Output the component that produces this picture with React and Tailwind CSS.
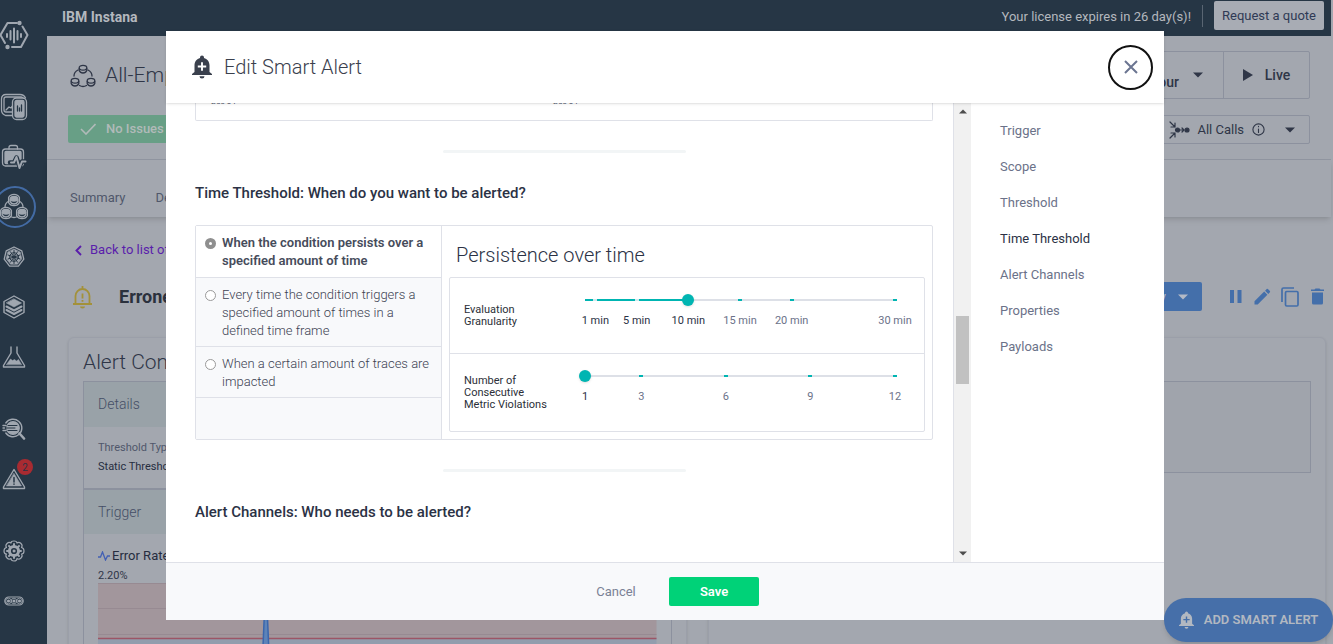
import React, { useState } from "react";

const stroke = {
  fill: "none",
  stroke: "currentColor",
  strokeLinecap: "round",
  strokeLinejoin: "round",
};

function LogoIcon() {
  return (
    <svg width="30" height="30" viewBox="0 0 30 30" className="shrink-0" {...stroke} strokeWidth="2">
      <path d="M18 3H8.500L1.500 15l4.500 8M13 27h9l6.500-12L23.500 6.500" />
      <path d="M8 14v3M11.500 11v8.500M15 8.500v14M18.500 11v8.500M22 14v3" />
      <circle cx="20.500" cy="3" r="1.200" fill="currentColor" />
      <circle cx="8.500" cy="27" r="1.200" fill="currentColor" />
    </svg>
  );
}

function DevicesIcon() {
  return (
    <svg width="28" height="28" viewBox="0 0 28 28" {...stroke} strokeWidth="1.300">
      <path d="M12 22.500H5.500Q1.500 21 1.500 17V6Q1.500 1.500 6 1.500H20Q24 1.500 25.500 5" />
      <rect x="4" y="4" width="19" height="15" rx="2" />
      <path d="M6 17l3-3 2 1 3-4" />
      <rect x="12.500" y="5" width="14" height="21.500" rx="4" fill="#263645" />
      <rect x="15" y="7.500" width="9" height="16.500" rx="1.500" fill="currentColor" />
      <path d="M17.500 18v-5M19.500 18v-3M21.500 18v-6" stroke="#263645" />
    </svg>
  );
}

function MonitorIcon() {
  return (
    <svg width="26" height="26" viewBox="0 0 26 26" {...stroke} strokeWidth="1.300">
      <path d="M8 5V3.500Q8 1.500 10 1.500h4.500Q16.500 1.500 16.500 3.500V5" />
      <rect x="1.500" y="5" width="21" height="17" rx="3" />
      <rect x="4" y="7.500" width="16" height="12" rx="1" fill="currentColor" />
      <path d="M9 18.500h4l2.500-5 3 9 2.500-5h4" stroke="#263645" strokeWidth="4.500" />
      <path d="M10 18.500h3l2.500-5.500 3 11 2.500-6.500h3.500" strokeWidth="2" />
    </svg>
  );
}

function AppsIcon({ size = 28, filled }) {
  const fill = filled ? "currentColor" : "none";
  const Node = ({ x, y }) => (
    <g>
      {filled && (
        <path
          d={`M${x - 5.400} ${y - 2}Q${x - 4} ${y - 5.200} ${x} ${y - 5.200}T${x + 5.400} ${y - 2}V${y + 3}Q${x + 4} ${y + 6.200} ${x} ${y + 6.200}T${x - 5.400} ${y + 3}Z`}
        />
      )}
      <ellipse cx={x} cy={y - 0.800} rx="3.800" ry="2.400" fill={fill} />
      <path d={`M${x - 3.800} ${y}v2q1 2.500 3.800 2.500t3.800-2.500v-2`} />
    </g>
  );
  return (
    <svg width={size} height={size} viewBox="0 0 28 28" {...stroke} strokeWidth="1.300">
      <path d="M9 8Q5 10 5 14M19 8q4 2 4 6M10.500 23.500q3.500 2 7 0" />
      <Node x={14} y={6.500} />
      <Node x={6} y={19.500} />
      <Node x={22} y={19.500} />
    </svg>
  );
}

function KubernetesIcon() {
  return (
    <svg width="22" height="22" viewBox="0 0 22 22" {...stroke} strokeWidth="1.300">
      <path d="M11 1l7.800 3.800 2 8.400-5.400 7H6.600l-5.400-7 2-8.400z" />
      <path
        d="M11 3l6.200 3 1.600 6.800-4.300 5.500H7.500l-4.300-5.500L4.800 6z"
        fill="currentColor"
        strokeWidth="0.500"
      />
      <g stroke="#263645" strokeWidth="1">
        <circle cx="11" cy="11" r="4.300" />
        <path d="M11 4.500v13M5 9l12 4M5 13l12-4M7.500 5.800l7 10.400M14.500 5.800l-7 10.400" />
      </g>
    </svg>
  );
}

function LayersIcon() {
  return (
    <svg width="22" height="24" viewBox="0 0 22 24" {...stroke} strokeWidth="1.400">
      <path d="M11 1l10 5.500v11L11 23 1 17.500v-11z" />
      <path d="M11 4l7.500 4-7.500 4-7.500-4z" fill="currentColor" strokeWidth="0.600" />
      <path d="M3.500 11.500l7.500 4 7.500-4M3.500 15l7.500 4 7.500-4" strokeWidth="2" />
    </svg>
  );
}

function FlaskIcon() {
  return (
    <svg width="24" height="22" viewBox="0 0 24 22" {...stroke} strokeWidth="1.400">
      <path d="M9 1v6L1.500 19.500V21h21v-1.500L15 7V1" />
      <path d="M4.500 18.500L8.500 13l2 1.500 2-1 2 1.500 2-1.500 3 5z" fill="currentColor" strokeWidth="0.500" />
    </svg>
  );
}

function AnalyzeIcon() {
  return (
    <svg width="24" height="22" viewBox="0 0 24 22" {...stroke} strokeWidth="1.400">
      <path d="M3.800 5A8.800 8.800 0 1 1 3.800 15" />
      <circle cx="11" cy="10" r="6.200" fill="currentColor" />
      <path d="M17.500 15.500l4.500 5" strokeWidth="2.600" />
      <path d="M6 7.500h9M4 10h9M6 12.500h9" stroke="#263645" strokeWidth="1" />
      <path d="M1 7.500h3M1 10h1.500M1 12.500h3" />
    </svg>
  );
}

function WarningIcon() {
  return (
    <svg width="24" height="22" viewBox="0 0 24 22" {...stroke} strokeWidth="1.400">
      <path d="M12 1.500L22.500 19v1.500h-21V19z" />
      <path d="M12 5.500l7.500 12.500h-15z" fill="currentColor" strokeWidth="0.500" />
      <path d="M12 9.500v4.500M12 16v.2" stroke="#263645" strokeWidth="1.500" />
    </svg>
  );
}

function GearIcon() {
  return (
    <svg width="22" height="22" viewBox="0 0 22 22" {...stroke} strokeWidth="1.200">
      <path d="M8 3Q8 1 11 1t3 2q2-1.500 4 .500t0.500 4Q21 8 21 11t-2.500 3q1.500 2-.500 4t-4 .500Q14 21 11 21t-3-2.500q-2 1.500-4-.500t-.500-4Q1 14 1 11t2.500-3.500Q2 5.500 4 3.500T8 3z" />
      <circle cx="11" cy="11" r="4.600" strokeWidth="3" />
      <path
        d="M11 4v2M11 16v2M4 11h2M16 11h2M6 6l1.400 1.400M14.600 14.600L16 16M6 16l1.400-1.400M14.600 7.400L16 6"
        strokeWidth="2"
      />
      <circle cx="11" cy="11" r="1.200" fill="currentColor" strokeWidth="0.500" />
    </svg>
  );
}

function MoreIcon() {
  return (
    <svg width="20" height="10" viewBox="0 0 20 10" {...stroke} strokeWidth="1.200">
      <rect x="0.800" y="1" width="18.400" height="8" rx="4" />
      {[4.500, 10, 15.500].map((x) => (
        <g key={x}>
          <circle cx={x} cy="5" r="2.800" strokeWidth="0.800" />
          <circle cx={x} cy="5" r="1.600" fill="currentColor" stroke="none" />
        </g>
      ))}
    </svg>
  );
}

function BellPlusIcon({ width = 20, height = 24, plus = "#fff" }) {
  return (
    <svg width={width} height={height} viewBox="0 0 20 24">
      <path
        fill="currentColor"
        d="M10 .500a2 2 0 0 1 2 2v.500c3.200.900 5.500 3.700 5.500 7.200V17l2.500 2v1H0v-1l2.500-2v-6.800C2.500 6.700 4.800 3.900 8 3v-.500a2 2 0 0 1 2-2zM7.500 21.300h5a2.500 2.300 0 0 1-5 0z"
      />
      <path stroke={plus} strokeWidth="1.900" d="M10 7.300v8.400M5.800 11.500h8.400" />
    </svg>
  );
}

function Caret({ className = "" }) {
  return (
    <svg width="10" height="6" viewBox="0 0 10 6" className={className}>
      <path d="M0 .500h10L5 5.500z" fill="currentColor" />
    </svg>
  );
}

const NAV = [
  [
    ["Websites & Mobile Apps", DevicesIcon],
    ["Synthetic Monitoring", MonitorIcon],
    ["Applications", AppsIcon],
    ["Kubernetes", KubernetesIcon],
    ["Infrastructure", LayersIcon],
    ["Lab", FlaskIcon],
  ],
  [
    ["Analytics", AnalyzeIcon],
    ["Events", WarningIcon],
  ],
  [
    ["Settings", GearIcon],
    ["More", MoreIcon],
  ],
];

function Sidebar() {
  return (
    <aside className="flex w-[47px] shrink-0 flex-col overflow-hidden bg-[#263645] text-[#a0a7b0]">
      <a href="#home" aria-label="Home" className="flex h-[70px] w-7 items-center justify-center">
        <LogoIcon />
      </a>
      <nav className="flex flex-col gap-[22px] pt-3">
        {NAV.map((group, i) => (
          <div key={i} className="flex flex-col">
            {group.map(([name, Icon]) => (
              <a
                key={name}
                href="#nav"
                aria-label={name}
                className="relative flex h-[50px] w-7 items-center justify-center"
              >
                {name === "Applications" && (
                  <span className="absolute top-1 -left-[6px] size-[42px] rounded-full border-2 border-[#436ba4]" />
                )}
                <Icon filled={name === "Applications" ? true : undefined} />
                {name === "Events" && (
                  <span className="absolute top-[5px] left-[17px] flex size-4 items-center justify-center rounded-full bg-[#a82b31] text-[10px] text-[#2b3245]">
                    2
                  </span>
                )}
              </a>
            ))}
          </div>
        ))}
      </nav>
    </aside>
  );
}

function TopBar() {
  return (
    <header className="flex h-9 shrink-0 items-start justify-between bg-[#263645] pr-[7px] pl-[15px] text-[13px] text-[#b4b8be]">
      <span className="pt-[7px] text-[14px] font-bold leading-5">IBM Instana</span>
      <div className="flex items-start">
        <span className="pt-[7px] leading-5">Your license expires in 26 day(s)!</span>
        <span className="mx-[11px] mt-[5px] h-[22px] w-px bg-[#596572]" />
        <button className="mt-px h-[29px] w-[110px] rounded-xs bg-[#a8acb4] text-[13px] text-[#2f3a55]">
          Request a quote
        </button>
      </div>
    </header>
  );
}

function PageHeader() {
  return (
    <div className="flex h-[124px] shrink-0 justify-between border-b border-[#9095a0] pr-[21px] pl-[21px] text-[#2f3647]">
      <div className="flex flex-col">
        <div className="flex h-[79px] items-center gap-2 pl-px">
          <AppsIcon />
          <h1 className="text-[21px] font-light">All-Employees</h1>
        </div>
        <div className="flex h-7 w-[120px] items-center rounded-xs bg-[#689f86] pl-3 text-[13px] font-medium text-[#b1bab9]">
          <svg width="16" height="12" viewBox="0 0 16 12" className="mr-[10px]">
            <path d="M1 6l5 5L15.500 1" fill="none" stroke="currentColor" strokeWidth="1.600" />
          </svg>
          No Issues
        </div>
      </div>
      <div className="flex flex-col items-end gap-4 pt-[15px]">
        <div className="flex h-12 rounded-xs border border-[#8c919e] text-[14px] font-medium">
          <button className="flex w-[140px] items-center justify-end gap-[14px] border-r border-[#8c919e] pr-5">
            <span className="pt-[14px]">Last hour</span>
            <Caret />
          </button>
          <button className="flex w-[85px] items-center justify-center gap-3">
            <svg width="10" height="12" viewBox="0 0 10 12">
              <path d="M0 0l10 6-10 6z" fill="currentColor" />
            </svg>
            Live
          </button>
        </div>
        <button className="flex h-[29px] items-center rounded-xs border border-[#8c919e] pr-[14px] pl-3 text-[13px]">
          <svg width="21" height="18" viewBox="0 0 21 18" className="mr-[7px]" {...stroke} strokeWidth="1.200">
            <path d="M1 1l5 5M6 2v4H2M1 17l5-5M6 16v-4H2M10 9h5M13 7l2 2-2 2" />
            <circle cx="8.500" cy="9" r="2" fill="currentColor" />
            <circle cx="18" cy="9" r="2" fill="currentColor" />
          </svg>
          All Calls
          <svg width="13" height="13" viewBox="0 0 13 13" className="mr-5 ml-2" {...stroke} strokeWidth="1.100">
            <circle cx="6.500" cy="6.500" r="5.600" />
            <path d="M6.500 6v3.500M6.500 3.400v.3" />
          </svg>
          <Caret />
        </button>
      </div>
    </div>
  );
}

function AlertActions() {
  return (
    <div className="flex items-center text-[#446faa]">
      <button className="flex h-[29px] w-[116px] items-center justify-end gap-3 rounded-xs bg-[#446faa] pr-[14px] text-[13px] text-[#b4bac6]">
        View History
        <Caret />
      </button>
      <button aria-label="Pause" className="ml-7">
        <svg width="12" height="13" viewBox="0 0 12 13" fill="currentColor">
          <path d="M0 0h4v13H0zM7.500 0h4v13h-4z" />
        </svg>
      </button>
      <button aria-label="Edit" className="ml-3">
        <svg width="17" height="17" viewBox="0 0 17 17" fill="currentColor">
          <path d="M.500 13.300L10.200 3.600l3.200 3.200-9.700 9.700H.500zM15.900 4.300L14.300 5.900 11.100 2.700l1.600-1.600a.9.900 0 0 1 1.200 0l2 2a.9.900 0 0 1 0 1.200z" />
        </svg>
      </button>
      <button aria-label="Copy" className="ml-2.5">
        <svg width="18" height="20" viewBox="0 0 18 20" fill="none" stroke="currentColor" strokeWidth="1.700">
          <path d="M1 15V2.500Q1 1 2.500 1H13" />
          <rect x="4.500" y="4.500" width="12.500" height="14.500" rx="1.200" />
        </svg>
      </button>
      <button aria-label="Delete" className="ml-3">
        <svg width="13" height="17" viewBox="0 0 13 17" fill="currentColor">
          <path d="M1 4.500h11V15a1.500 1.500 0 0 1-1.500 1.500h-8A1.500 1.500 0 0 1 1 15zM0 1.500h3.500L4.500.500h4l1 1H13v1.600H0z" />
        </svg>
      </button>
    </div>
  );
}

function AlertDetails() {
  return (
    <section className="flex flex-1 flex-col rounded-md border border-[#9b9fa9] px-[14px] pt-2 shadow-sm">
      <h2 className="h-[35px] text-[21px] font-light leading-8 text-[#2f3647]">Alert Configuration</h2>
      <div className="flex flex-1 flex-col border border-b-0 border-[#8c919e] text-[11px]">
        <h3 className="flex h-[45px] items-center bg-[#99a2a8] px-[14px] text-[14px] font-light text-[#454e66]">Details</h3>
        <dl className="flex h-[61px] flex-col gap-[3px] px-[14px] pt-[13px]">
          <dt className="leading-4 text-[#50576b]">Threshold Type</dt>
          <dd className="leading-4 text-[#262d3f]">Static Threshold</dd>
        </dl>
        <h3 className="flex h-[46px] items-center border-t-2 border-[#8c919e] bg-[#99a2a8] px-[14px] text-[14px] font-light text-[#454e66]">
          Trigger
        </h3>
        <div className="px-[14px] pt-3">
          <div className="flex items-center gap-0.5 text-[13px] leading-5 text-[#262d3f]">
            <svg width="12" height="10" viewBox="0 0 12 10" fill="none" stroke="#4360b4" strokeWidth="1.300">
              <path d="M0 6h2.500L4.500 1l3 8L9.500 5H12" />
            </svg>
            Error Rate
          </div>
          <div className="h-[17px] text-[11px] leading-5 text-[#2f3647]">2.20%</div>
          <svg
            height="90"
            viewBox="0 0 559 90"
            preserveAspectRatio="none"
            className="w-full"
            role="img"
            aria-label="Error rate over time"
          >
            <rect width="559" height="55" fill="#a2969c" />
            <rect y="55" width="559" height="35" fill="#929dad" />
            <path d="M0 .500h559M0 25.500h559M0 51.500h559" stroke="#978a92" />
            <path d="M0 55.500h559" stroke="#9c5566" strokeWidth="1.500" />
            <path d="M164 90L167 20h2l3 70" fill="#5d83b8" stroke="#3a66ad" strokeWidth="1.500" />
          </svg>
        </div>
      </div>
    </section>
  );
}

function Page() {
  return (
    <main className="flex min-w-0 flex-1 flex-col bg-[#a3a7af]">
      <TopBar />
      <PageHeader />
      <div className="flex h-[57px] shrink-0 items-center gap-[30px] px-[23px] pt-[18px] text-[13px] text-[#50576b] shadow-md">
        <a href="#summary">Summary</a>
        <a href="#dependencies">Dependencies</a>
      </div>
      <div className="flex flex-1 flex-col pt-[23px] pr-[5px] pl-[21px]">
        <a href="#alerts" className="flex h-5 items-center gap-2 pl-[7px] text-[13px] text-[#5a1eab]">
          <svg width="7" height="11" viewBox="0 0 7 11" fill="none" stroke="currentColor" strokeWidth="1.900">
            <path d="M6 1L1.500 5.500 6 10" />
          </svg>
          Back to list of alerts
        </a>
        <div className="flex h-[73px] items-center justify-between pr-0.5">
          <div className="flex items-center gap-[26px] pl-1">
            <svg width="21" height="24" viewBox="0 0 21 24" fill="none" stroke="#a3913a" strokeWidth="1.800">
              <path d="M1 19h19M3.500 19v-8a7 7 0 0 1 14 0v8M10.500 1v3M10.500 8.500v5M10.500 15v1.800" />
              <path d="M8 21.500h5a2.500 2 0 0 1-5 0z" fill="#a3913a" stroke="none" />
            </svg>
            <h2 className="text-[18px] font-bold text-[#2b313d]">Erroneous Calls</h2>
          </div>
          <AlertActions />
        </div>
        <div className="flex flex-1 gap-[21px] pt-1">
          <AlertDetails />
          <section className="flex-1 rounded-md border border-[#9b9fa9] px-[14px] pt-[43px] shadow-sm">
            <div className="h-[92px] border border-[#8c919e] bg-[#a0a4ac]" />
          </section>
        </div>
      </div>
    </main>
  );
}

function SliderField({ id, label, min, max, value, onChange, marks, unit }) {
  const pct = (v) => `${((v - min) / (max - min)) * 100}%`;
  return (
    <div className="flex h-full pr-[29px] pl-[14px] text-[11px]">
      <label htmlFor={id} className="flex w-[121px] shrink-0 items-center pr-8 leading-3 text-[#2b2f38]">
        {label}
      </label>
      <div className="relative mt-4 h-9 flex-1">
        <div className="absolute inset-x-0 top-[5px] h-0.5 bg-[#dde0e7]">
          <div className="h-full bg-[#00b5b2]" style={{ width: pct(value) }} />
        </div>
        {marks.map((m) => (
          <React.Fragment key={m}>
            <span
              className={`absolute top-[5px] h-0.5 w-1 -translate-x-1/2 ${m < value ? "bg-[#cfe9ec]" : "bg-[#00b5b2]"}`}
              style={{ left: pct(m) }}
            />
            <span
              className={`absolute top-[19px] -translate-x-1/2 leading-4 whitespace-nowrap ${m <= value ? "text-[#2b3245]" : "text-[#6b7289]"}`}
              style={{ left: pct(m) }}
            >
              {m}
              {unit}
            </span>
          </React.Fragment>
        ))}
        <input
          id={id}
          type="range"
          min={min}
          max={max}
          value={value}
          onChange={(e) => onChange(Number(e.target.value))}
          className="absolute -inset-x-1.5 top-0 h-3 appearance-none bg-transparent [&::-webkit-slider-thumb]:size-3 [&::-webkit-slider-thumb]:appearance-none [&::-webkit-slider-thumb]:rounded-full [&::-webkit-slider-thumb]:bg-[#00b5b2] [&::-webkit-slider-thumb]:shadow-sm"
        />
      </div>
    </div>
  );
}

const OPTIONS = [
  "When the condition persists over a specified amount of time",
  "Every time the condition triggers a specified amount of times in a defined time frame",
  "When a certain amount of traces are impacted",
];

const SECTIONS = ["Trigger", "Scope", "Threshold", "Time Threshold", "Alert Channels", "Properties", "Payloads"];

function Divider() {
  return <div className="h-[3px] w-[243px] self-center rounded-full bg-[#f2f5f6]" />;
}

function TimeThreshold() {
  const [option, setOption] = useState(0);
  const [granularity, setGranularity] = useState(10);
  const [violations, setViolations] = useState(1);
  return (
    <div className="flex rounded-xs border border-[#dfe1e8]">
      <fieldset className="flex w-[246px] shrink-0 flex-col border-r border-[#dfe1e8] bg-[#f8f9fb]">
        {OPTIONS.map((text, i) => (
          <label
            key={text}
            className={`flex items-start gap-1.5 border-b border-[#dfe1e8] pt-2 pr-1 pl-[9px] text-[13px] leading-[18px] ${
              option === i ? "bg-white pb-[7px] font-semibold text-[#464c5b]" : "pb-1.5 font-light text-[#3c4252]"
            }`}
          >
            <input
              type="radio"
              name="time-threshold"
              checked={option === i}
              onChange={() => setOption(i)}
              className="mt-1 size-[11px] shrink-0 appearance-none rounded-full border border-[#9a9a9a] bg-white checked:border-4 checked:border-[#8f8f8f]"
            />
            {text}
          </label>
        ))}
      </fieldset>
      <div className="flex-1 px-[7px] pb-[7px]">
        <h3 className="h-[51px] pt-[17px] pl-[7px] text-[20px] leading-6 font-light text-[#2b3245]">Persistence over time</h3>
        <div className="rounded-xs border border-[#dfe1e8]">
          <div className="h-[76px] border-b border-[#dfe1e8]">
            <SliderField
              id="granularity"
              label="Evaluation Granularity"
              min={0}
              max={30}
              value={granularity}
              onChange={setGranularity}
              marks={[1, 5, 10, 15, 20, 30]}
              unit=" min"
            />
          </div>
          <div className="h-[77px]">
            <SliderField
              id="violations"
              label="Number of Consecutive Metric Violations"
              min={1}
              max={12}
              value={violations}
              onChange={setViolations}
              marks={[1, 3, 6, 9, 12]}
              unit=""
            />
          </div>
        </div>
      </div>
    </div>
  );
}

function Dialog() {
  return (
    <div role="dialog" aria-labelledby="dialog-title" className="flex flex-1 flex-col bg-white">
      <header className="relative flex h-[72px] shrink-0 items-center justify-between pr-[11px] pl-[26px] shadow">
        <div className="flex items-center gap-3 text-[#3a404d]">
          <BellPlusIcon />
          <h2 id="dialog-title" className="text-[20px] font-light">
            Edit Smart Alert
          </h2>
        </div>
        <button
          aria-label="Close"
          className="flex size-[45px] items-center justify-center rounded-full border-2 border-[#111] text-[#6b7591]"
        >
          <svg width="14" height="14" viewBox="0 0 14 14" stroke="currentColor" strokeWidth="2">
            <path d="M1 1l12 12M13 1L1 13" />
          </svg>
        </button>
      </header>
      <div className="flex min-h-0 flex-1">
        <div className="flex flex-1 flex-col overflow-hidden border-r border-[#dfe1e8] pr-5 pl-[29px]">
          <div className="flex h-[18px] shrink-0 items-start overflow-hidden rounded-b-xs border border-t-0 border-[#dfe1e8] pl-[15px] text-[8px] leading-none text-[#50576b]">
            <span className="-mt-[5px] w-[342px]">Dec 04</span>
            <span className="-mt-[5px]">Dec 04</span>
          </div>
          <div className="flex flex-col pt-[29px]">
            <Divider />
            <h3 className="pt-[30px] pb-[22px] text-[15px] leading-5 font-medium text-[#2b3245]">
              Time Threshold: When do you want to be alerted?
            </h3>
            <TimeThreshold />
            <div className="flex flex-col pt-[29px]">
              <Divider />
              <h3 className="pt-[30px] text-[15px] leading-5 font-medium text-[#2b3245]">
                Alert Channels: Who needs to be alerted?
              </h3>
            </div>
          </div>
        </div>
        <div className="flex w-[17px] flex-col items-center bg-[#f1f1f1] py-1.5 text-[#4d4d4d]" aria-hidden="true">
          <svg width="8" height="5" viewBox="0 0 8 5">
            <path d="M0 4.500h8L4 .500z" fill="currentColor" />
          </svg>
          <div className="mt-[202px] h-[68px] w-[13px] bg-[#c1c1c1]" />
          <svg width="8" height="5" viewBox="0 0 8 5" className="mt-auto">
            <path d="M0 .500h8L4 4.500z" fill="currentColor" />
          </svg>
        </div>
        <nav className="flex w-[193px] flex-col gap-4 pt-[18px] pl-[29px] text-[13px] leading-5 text-[#6b7289]">
          {SECTIONS.map((s) => (
            <a key={s} href="#section" className={s === "Time Threshold" ? "text-[#2b3245]" : ""}>
              {s}
            </a>
          ))}
        </nav>
      </div>
      <footer className="flex h-[58px] shrink-0 items-center justify-center gap-2 border-t border-[#dfe1e8] bg-[#f8f9fb] text-[13px]">
        <button className="h-[29px] w-[90px] text-[#7b8195]">Cancel</button>
        <button className="h-[29px] w-[90px] rounded-xs bg-[#00d278] font-semibold text-white">Save</button>
      </footer>
    </div>
  );
}

export default function App() {
  return (
    <div className="relative flex h-screen overflow-hidden bg-[#a3a7af] pr-0.5 font-['Roboto','Noto_Sans',sans-serif]">
      <Sidebar />
      <Page />
      <button className="absolute right-0 bottom-0.5 flex h-11 w-[169px] items-center justify-center gap-2.5 rounded-full bg-[#466fa9] text-[13px] font-semibold text-[#b2b8c1] shadow-md">
        <BellPlusIcon width={15} height={18} plus="#466fa9" />
        ADD SMART ALERT
      </button>
      <div className="absolute inset-0 flex pt-[31px] pr-[169px] pb-6 pl-[166px]">
        <Dialog />
      </div>
    </div>
  );
}
